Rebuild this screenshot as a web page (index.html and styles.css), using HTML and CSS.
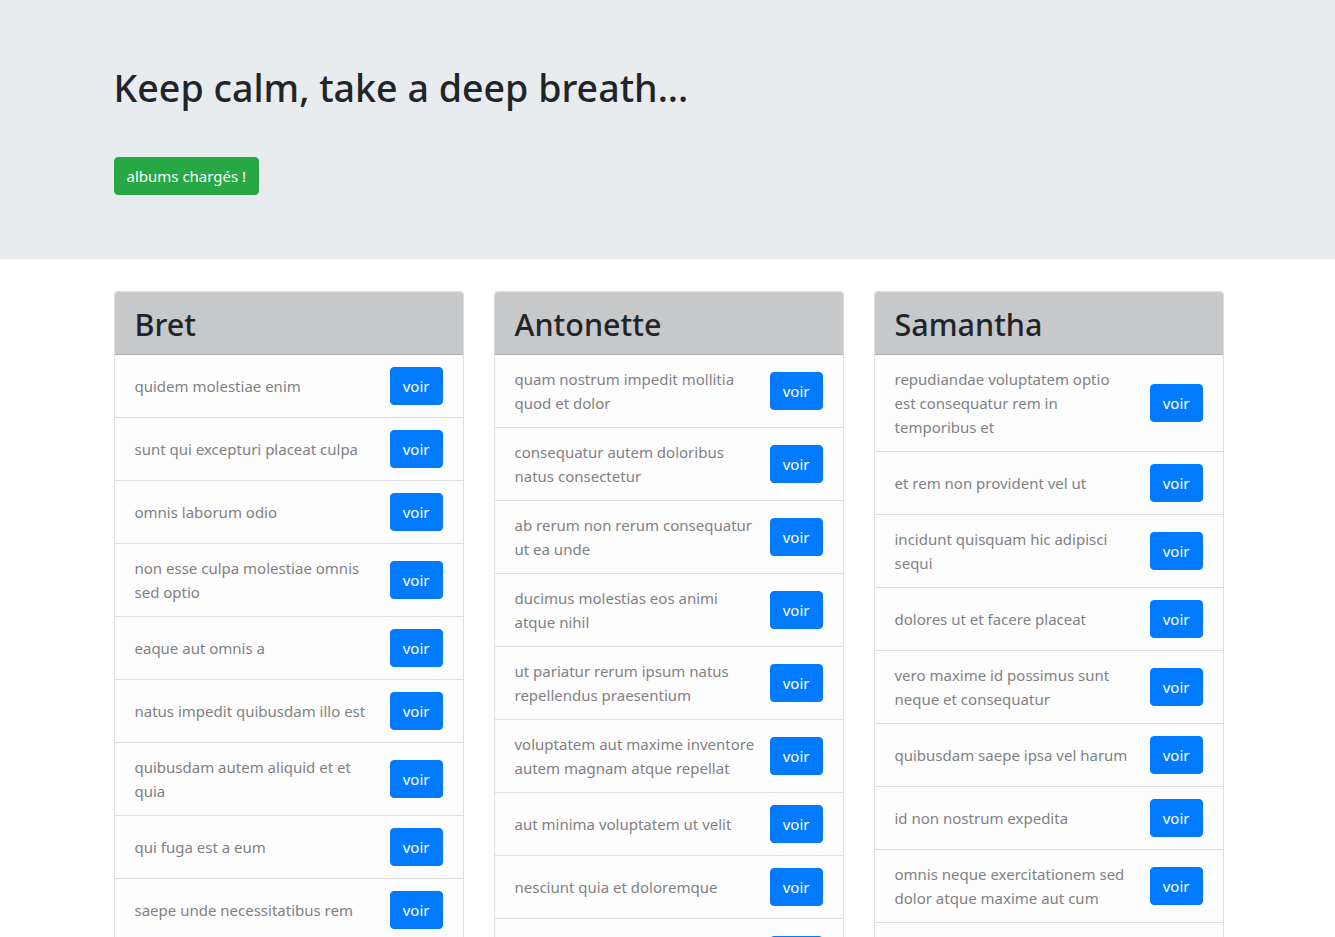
FILE: index.html
```html
<!DOCTYPE html>
<html lang="fr">
<head>
<meta charset="utf-8">
<title>Albums</title>
<link rel="stylesheet" href="styles.css">
</head>
<body>
<header class="jumbotron">
  <div class="container">
    <h1 class="title">Keep calm, take a deep breath...</h1>
    <button class="btn btn-success">albums chargés !</button>
  </div>
</header>
<main class="container">
  <div class="cards">
    <section class="card">
      <div class="card-header"><h2>Bret</h2></div>
      <ul class="list">
        <li class="item"><span class="label">quidem molestiae enim</span><button class="btn btn-primary">voir</button></li>
        <li class="item"><span class="label">sunt qui excepturi placeat culpa</span><button class="btn btn-primary">voir</button></li>
        <li class="item"><span class="label">omnis laborum odio</span><button class="btn btn-primary">voir</button></li>
        <li class="item"><span class="label">non esse culpa molestiae omnis<br>sed optio</span><button class="btn btn-primary">voir</button></li>
        <li class="item"><span class="label">eaque aut omnis a</span><button class="btn btn-primary">voir</button></li>
        <li class="item"><span class="label">natus impedit quibusdam illo est</span><button class="btn btn-primary">voir</button></li>
        <li class="item"><span class="label">quibusdam autem aliquid et et<br>quia</span><button class="btn btn-primary">voir</button></li>
        <li class="item"><span class="label">qui fuga est a eum</span><button class="btn btn-primary">voir</button></li>
        <li class="item"><span class="label">saepe unde necessitatibus rem</span><button class="btn btn-primary">voir</button></li>
        <li class="item"><span class="label">distinctio laborum qui</span><button class="btn btn-primary">voir</button></li>
      </ul>
    </section>
    <section class="card">
      <div class="card-header"><h2>Antonette</h2></div>
      <ul class="list">
        <li class="item"><span class="label">quam nostrum impedit mollitia<br>quod et dolor</span><button class="btn btn-primary">voir</button></li>
        <li class="item"><span class="label">consequatur autem doloribus<br>natus consectetur</span><button class="btn btn-primary">voir</button></li>
        <li class="item"><span class="label">ab rerum non rerum consequatur<br>ut ea unde</span><button class="btn btn-primary">voir</button></li>
        <li class="item"><span class="label">ducimus molestias eos animi<br>atque nihil</span><button class="btn btn-primary">voir</button></li>
        <li class="item"><span class="label">ut pariatur rerum ipsum natus<br>repellendus praesentium</span><button class="btn btn-primary">voir</button></li>
        <li class="item"><span class="label">voluptatem aut maxime inventore<br>autem magnam atque repellat</span><button class="btn btn-primary">voir</button></li>
        <li class="item"><span class="label">aut minima voluptatem ut velit</span><button class="btn btn-primary">voir</button></li>
        <li class="item"><span class="label">nesciunt quia et doloremque</span><button class="btn btn-primary">voir</button></li>
        <li class="item"><span class="label">velit pariatur quaerat similique<br>libero omnis quia</span><button class="btn btn-primary">voir</button></li>
        <li class="item"><span class="label">voluptas rerum iure ut enim</span><button class="btn btn-primary">voir</button></li>
      </ul>
    </section>
    <section class="card">
      <div class="card-header"><h2>Samantha</h2></div>
      <ul class="list">
        <li class="item"><span class="label">repudiandae voluptatem optio<br>est consequatur rem in<br>temporibus et</span><button class="btn btn-primary">voir</button></li>
        <li class="item"><span class="label">et rem non provident vel ut</span><button class="btn btn-primary">voir</button></li>
        <li class="item"><span class="label">incidunt quisquam hic adipisci<br>sequi</span><button class="btn btn-primary">voir</button></li>
        <li class="item"><span class="label">dolores ut et facere placeat</span><button class="btn btn-primary">voir</button></li>
        <li class="item"><span class="label">vero maxime id possimus sunt<br>neque et consequatur</span><button class="btn btn-primary">voir</button></li>
        <li class="item"><span class="label">quibusdam saepe ipsa vel harum</span><button class="btn btn-primary">voir</button></li>
        <li class="item"><span class="label">id non nostrum expedita</span><button class="btn btn-primary">voir</button></li>
        <li class="item"><span class="label">omnis neque exercitationem sed<br>dolor atque maxime aut cum</span><button class="btn btn-primary">voir</button></li>
        <li class="item"><span class="label">inventore ut quasi magnam<br>itaque est fugit</span><button class="btn btn-primary">voir</button></li>
        <li class="item"><span class="label">tempora assumenda et similique<br>odit distinctio error</span><button class="btn btn-primary">voir</button></li>
      </ul>
    </section>
  </div>
</main>
</body>
</html>
```
FILE: styles.css
```css
* { box-sizing: border-box; }
body {
  margin: 0;
  font-family: "Noto Sans", "Open Sans", sans-serif;
  font-size: 15px;
  line-height: 24px;
  color: #212529;
  background: #fff;
}
.container {
  width: 1110px;
  margin: 0 auto;
}
.jumbotron {
  background: #e9ecef;
  padding: 64px 0;
  margin-bottom: 32px;
}
.title {
  margin: 0 0 45px;
  font-size: 37.6px;
  font-weight: 500;
  line-height: 48px;
  padding-left: 1px;
}
.btn {
  display: inline-block;
  font-family: inherit;
  font-size: 15px;
  line-height: 24px;
  padding: 6px 12px;
  border: 1px solid transparent;
  border-radius: 4px;
  color: #fff;
  cursor: pointer;
}
.btn-success { background: #28a745; border-color: #28a745; margin-left: 1px; }
.btn-primary { background: #007bff; border-color: #007bff; flex: none; }
.cards {
  display: grid;
  grid-template-columns: repeat(3, 350px);
  column-gap: 30px;
  align-items: start;
  padding-left: 1px;
}
.card {
  border: 1px solid rgba(0,0,0,.125);
  border-radius: 4px;
  overflow: hidden;
  background: #fff;
}
.card-header {
  background: #c6c8ca;
  padding: 13px 20px 11px;
  border-bottom: 1px solid rgba(0,0,0,.125);
}
.card-header h2 {
  margin: 0;
  font-size: 30.5px;
  font-weight: 500;
  line-height: 38.4px;
}
.list {
  list-style: none;
  margin: 0;
  padding: 0;
}
.item {
  display: flex;
  align-items: center;
  justify-content: space-between;
  gap: 8px;
  padding: 12px 20px;
  background: #fdfdfe;
  color: #818182;
  border-bottom: 1px solid rgba(0,0,0,.125);
}
.label { white-space: nowrap; }
.item:last-child { border-bottom: 0; }
```
